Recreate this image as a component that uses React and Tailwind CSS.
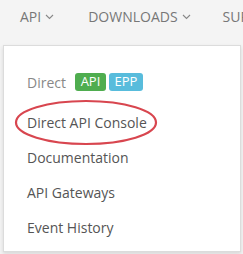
import React from "react";

function Chevron() {
    return (
        <svg width="9" height="6" viewBox="0 0 9 6" className="ml-[4px] mt-[2px]">
            <path d="M1 1l3.5 3.5L8 1" fill="none" stroke="#888" strokeWidth="1.1" />
        </svg>
    );
}

const items = ["Direct API Console", "Documentation", "API Gateways", "Event History"];

export default function App() {
    return (
        <div className="w-[243px] h-[254px] overflow-hidden bg-[#f4f4f4] text-[14px] text-[#555]" style={{ fontFamily: '"Open Sans", "Noto Sans", sans-serif' }}>
            <nav className="flex items-center h-[32px] pl-[20px] text-[#777] whitespace-nowrap">
                <span className="flex items-center">API<Chevron /></span>
                <span className="flex items-center ml-[34px]">DOWNLOADS<Chevron /></span>
                <span className="ml-[32px]">SUPPORT</span>
            </nav>
            <div className="relative ml-[3px] mt-[13px] w-[238px] h-[207px] bg-white border border-[#dcdcdc] shadow-[0_2px_4px_rgba(0,0,0,0.12)]">
                <div className="flex items-center h-[24px] mt-[24px] pl-[23px]">
                    <span className="text-[#888] mr-[9px]">Direct</span>
                    <span className="flex items-center justify-center w-[31px] h-[18px] rounded-[3px] bg-[#4fad4f] text-white text-[13px]">API</span>
                    <span className="flex items-center justify-center w-[34px] h-[18px] ml-[3px] rounded-[3px] bg-[#58bcdc] text-white text-[13px]">EPP</span>
                </div>
                <ul className="mt-[11px]">
                    {items.map((item) => (
                        <li key={item} className="flex items-center h-[35px] pl-[23px]">{item}</li>
                    ))}
                </ul>
                <svg className="absolute left-[10px] top-[53px]" width="144" height="47" viewBox="0 0 144 47">
                    <ellipse cx="72" cy="23.5" rx="70" ry="21.5" fill="none" stroke="#d8464f" strokeWidth="2.2" />
                </svg>
            </div>
        </div>
    );
}
